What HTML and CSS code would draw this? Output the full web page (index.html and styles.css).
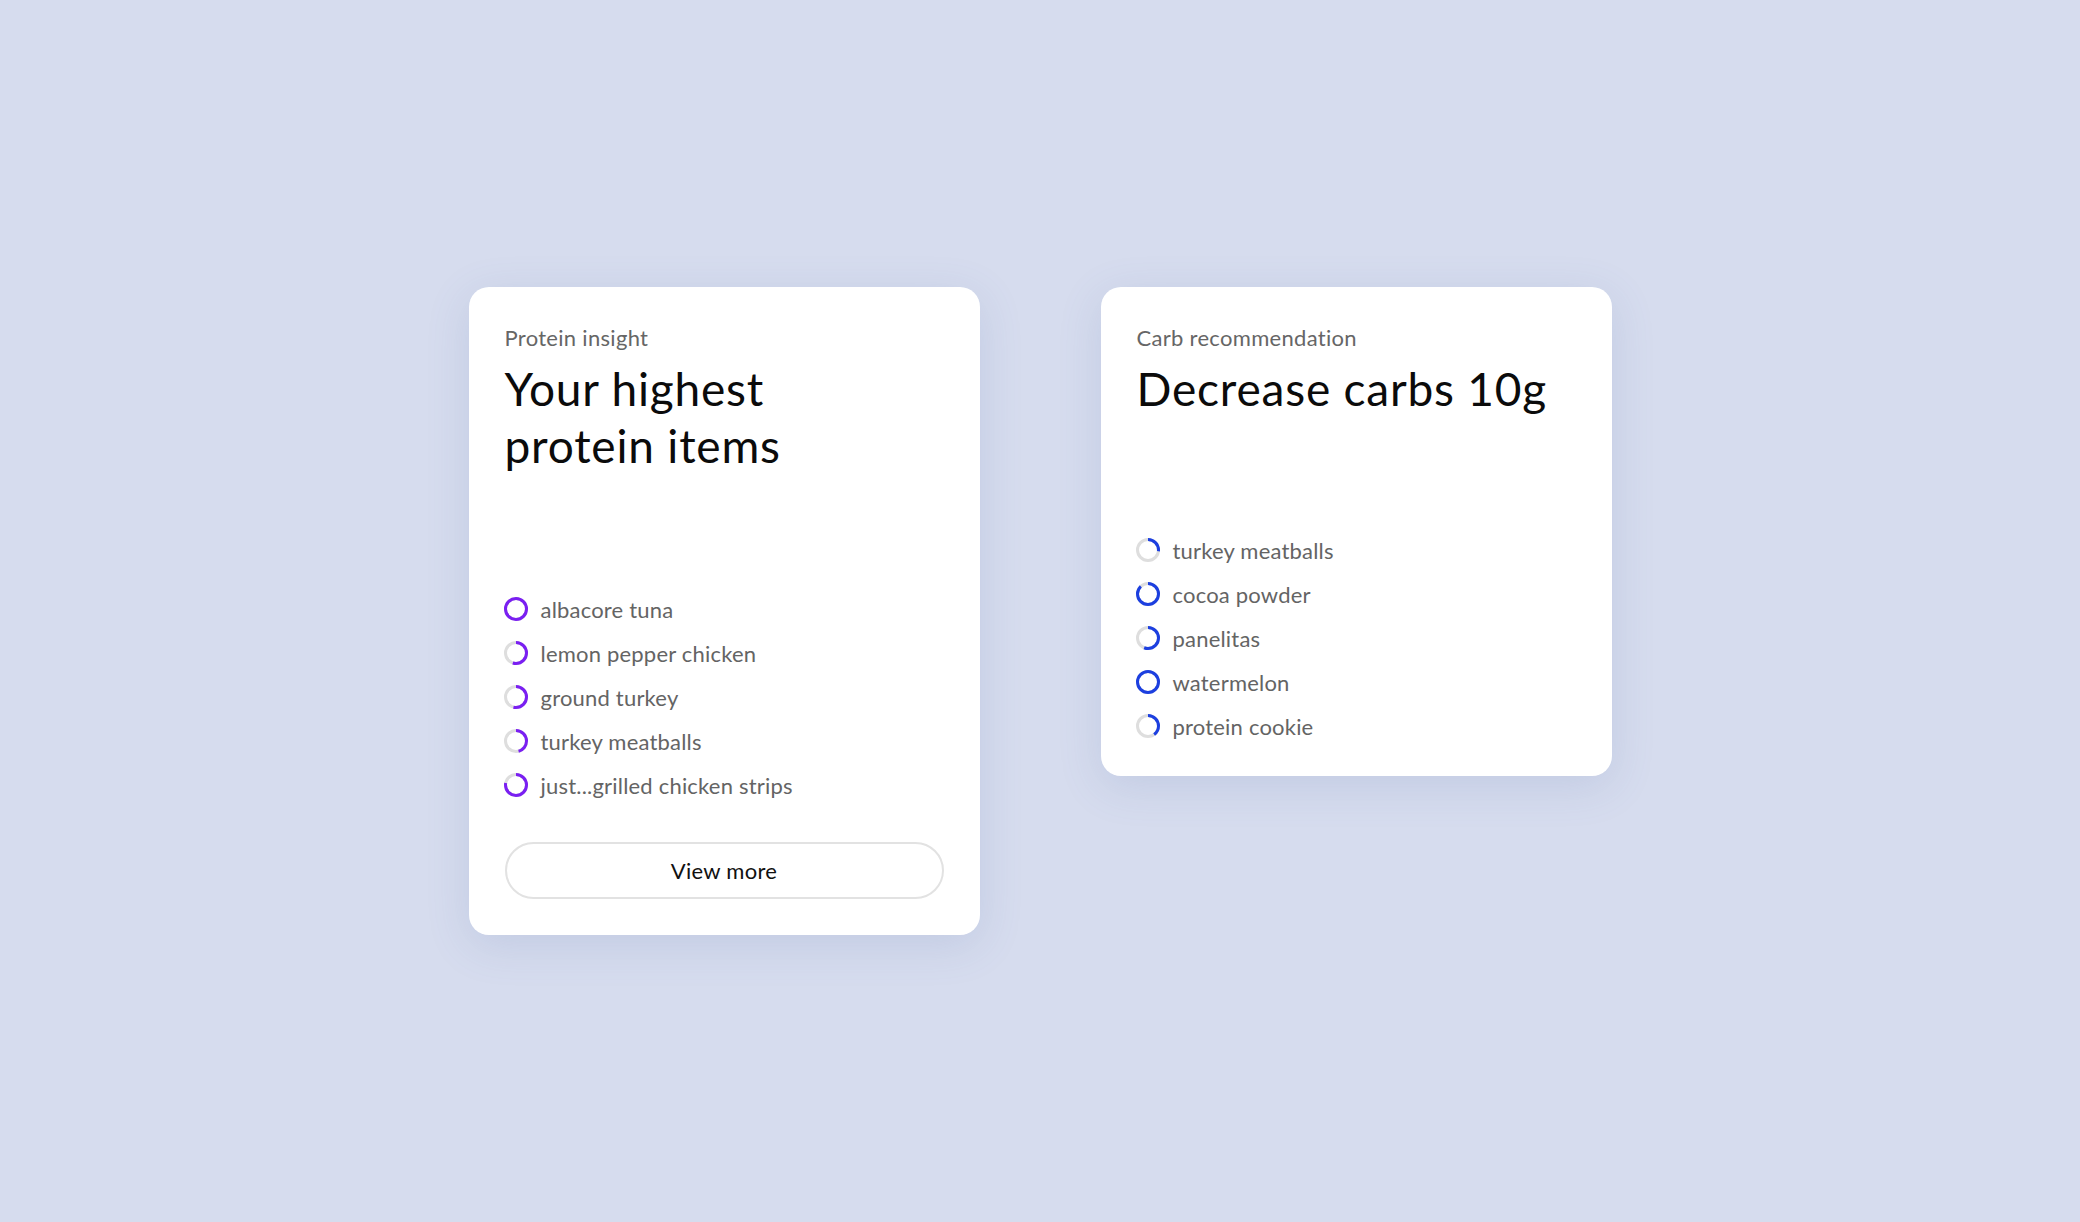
FILE: index.html
```html
<!DOCTYPE html>
<html lang="en">
<head>
<meta charset="utf-8">
<title>Insights</title>
<link rel="stylesheet" href="styles.css">
</head>
<body>
<main class="cards">
  <section class="card">
    <p class="label">Protein insight</p>
    <h2 class="title">Your highest<br>protein items</h2>
    <ul class="items items-tall purple">
      <li class="item"><svg class="ring" viewBox="0 0 24 24"><circle class="track" cx="12" cy="12" r="10.5"/><circle class="arc" cx="12" cy="12" r="10.5" pathLength="100" stroke-dasharray="100 100"/></svg><span>albacore tuna</span></li>
      <li class="item"><svg class="ring" viewBox="0 0 24 24"><circle class="track" cx="12" cy="12" r="10.5"/><circle class="arc" cx="12" cy="12" r="10.5" pathLength="100" stroke-dasharray="55 100"/></svg><span>lemon pepper chicken</span></li>
      <li class="item"><svg class="ring" viewBox="0 0 24 24"><circle class="track" cx="12" cy="12" r="10.5"/><circle class="arc" cx="12" cy="12" r="10.5" pathLength="100" stroke-dasharray="54 100"/></svg><span>ground turkey</span></li>
      <li class="item"><svg class="ring" viewBox="0 0 24 24"><circle class="track" cx="12" cy="12" r="10.5"/><circle class="arc" cx="12" cy="12" r="10.5" pathLength="100" stroke-dasharray="46 100"/></svg><span>turkey meatballs</span></li>
      <li class="item"><svg class="ring" viewBox="0 0 24 24"><circle class="track" cx="12" cy="12" r="10.5"/><circle class="arc" cx="12" cy="12" r="10.5" pathLength="100" stroke-dasharray="78 100"/></svg><span>just...grilled chicken strips</span></li>
    </ul>
    <button class="more" type="button">View more</button>
  </section>
  <section class="card">
    <p class="label">Carb recommendation</p>
    <h2 class="title">Decrease carbs 10g</h2>
    <ul class="items items-short blue">
      <li class="item"><svg class="ring" viewBox="0 0 24 24"><circle class="track" cx="12" cy="12" r="10.5"/><circle class="arc" cx="12" cy="12" r="10.5" pathLength="100" stroke-dasharray="27 100"/></svg><span>turkey meatballs</span></li>
      <li class="item"><svg class="ring" viewBox="0 0 24 24"><circle class="track" cx="12" cy="12" r="10.5"/><circle class="arc" cx="12" cy="12" r="10.5" pathLength="100" stroke-dasharray="88 100"/></svg><span>cocoa powder</span></li>
      <li class="item"><svg class="ring" viewBox="0 0 24 24"><circle class="track" cx="12" cy="12" r="10.5"/><circle class="arc" cx="12" cy="12" r="10.5" pathLength="100" stroke-dasharray="56 100"/></svg><span>panelitas</span></li>
      <li class="item"><svg class="ring" viewBox="0 0 24 24"><circle class="track" cx="12" cy="12" r="10.5"/><circle class="arc" cx="12" cy="12" r="10.5" pathLength="100" stroke-dasharray="100 100"/></svg><span>watermelon</span></li>
      <li class="item"><svg class="ring" viewBox="0 0 24 24"><circle class="track" cx="12" cy="12" r="10.5"/><circle class="arc" cx="12" cy="12" r="10.5" pathLength="100" stroke-dasharray="40 100"/></svg><span>protein cookie</span></li>
    </ul>
  </section>
</main>
</body>
</html>
```

FILE: styles.css
```css
* { box-sizing: border-box; }

html, body {
  margin: 0;
  padding: 0;
}

body {
  background: #d6dcee;
  min-height: 1222px;
  display: flex;
  justify-content: center;
  align-items: center;
  font-family: Lato, "Noto Sans", sans-serif;
}

.cards {
  display: flex;
  align-items: flex-start;
  gap: 121px;
}

.card {
  width: 511px;
  background: #ffffff;
  border-radius: 20px;
  padding: 36px 36px 38px 36px;
  box-shadow: 0 10px 44px rgba(90, 110, 170, 0.16);
  display: flex;
  flex-direction: column;
}

.label {
  margin: 0;
  font-size: 22px;
  line-height: 30px;
  letter-spacing: 0.3px;
  color: #666666;
}

.title {
  margin: 7px 0 0 0;
  font-size: 46px;
  line-height: 57px;
  letter-spacing: 0.8px;
  font-weight: 400;
  color: #0b0b0b;
}

.items {
  list-style: none;
  margin: 0;
  padding: 0;
  display: flex;
  flex-direction: column;
  gap: 20px;
}

.items-tall { margin-top: 123px; }
.items-short { margin-top: 121px; }

.item {
  display: flex;
  align-items: center;
  gap: 13px;
  height: 24px;
  font-size: 22px;
  letter-spacing: 0.2px;
  color: #646464;
  margin-left: -1px;
}

.ring {
  width: 24px;
  height: 24px;
  flex: none;
  transform: rotate(-90deg);
}

.track {
  fill: none;
  stroke: #dedede;
  stroke-width: 3;
}

.arc {
  fill: none;
  stroke-width: 3;
}

.purple .arc { stroke: #7a1ff2; }
.blue .arc { stroke: #1c3fe0; }

.more {
  margin-top: 45px;
  height: 57px;
  width: 100%;
  border: 2px solid #e2e2e2;
  border-radius: 29px;
  background: #ffffff;
  font-family: Lato, "Noto Sans", sans-serif;
  font-size: 22px;
  letter-spacing: 0.3px;
  color: #111111;
  margin-bottom: -2px;
}
```
